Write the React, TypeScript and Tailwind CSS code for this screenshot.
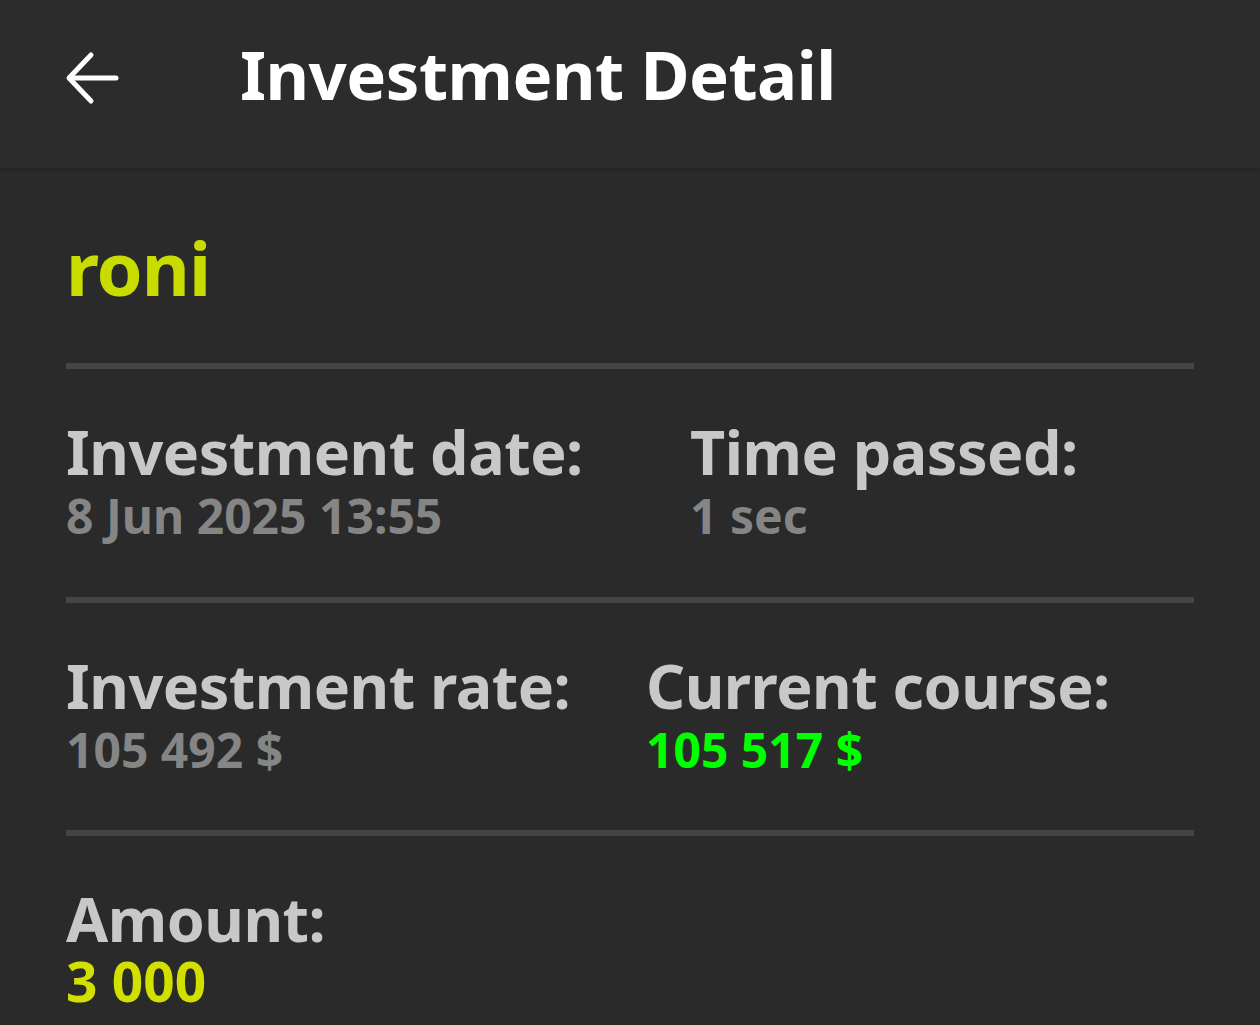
import React from "react";

const font = { fontFamily: '"Noto Sans", "Open Sans", sans-serif' };

function Divider() {
  return <div className="h-[6px] bg-[#444444] mx-[66px]" />;
}

export default function App() {
  return (
    <div className="w-[1260px] h-[1025px] bg-[#2a2a2a] overflow-hidden" style={font}>
      <header className="h-[168px] bg-[#2c2c2c] shadow-[0_2px_4px_rgba(0,0,0,0.2)] relative">
        <div className="flex items-start pt-[34px]">
          <svg width="56" height="56" viewBox="0 0 56 56" className="ml-[64px] mt-[16px]" fill="none" stroke="#ffffff" strokeWidth="5" strokeLinecap="round" strokeLinejoin="round">
            <path d="M52 28H6" />
            <path d="M27 5L5 28L27 51" />
          </svg>
          <h1 className="ml-[120px] text-[67px] leading-[80px] font-bold text-white tracking-[-0.5px]">Investment Detail</h1>
        </div>
      </header>
      <div className="pt-[55px]">
        <div className="px-[66px] text-[74px] leading-[90px] font-bold text-[#c8dc00] tracking-[-1px]">roni</div>
        <div className="h-[50px]" />
        <Divider />
        <div className="flex px-[66px] pt-[47px] pb-[53px]">
          <div className="w-[624px]">
            <div className="text-[61px] leading-[72px] font-bold text-[#c8c8c8] tracking-[-0.5px]">Investment date:</div>
            <div className="text-[48px] leading-[56px] font-bold text-[#858585]">8 Jun 2025 13:55</div>
          </div>
          <div>
            <div className="text-[61px] leading-[72px] font-bold text-[#c8c8c8] tracking-[-0.5px]">Time passed:</div>
            <div className="text-[48px] leading-[56px] font-bold text-[#858585]">1 sec</div>
          </div>
        </div>
        <Divider />
        <div className="flex px-[66px] pt-[47px] pb-[52px]">
          <div className="w-[580px]">
            <div className="text-[61px] leading-[72px] font-bold text-[#c8c8c8] tracking-[-0.5px]">Investment rate:</div>
            <div className="text-[48px] leading-[56px] font-bold text-[#858585]">105 492 $</div>
          </div>
          <div>
            <div className="text-[61px] leading-[72px] font-bold text-[#c8c8c8] tracking-[-0.5px]">Current course:</div>
            <div className="text-[48px] leading-[56px] font-bold text-[#00ff00]">105 517 $</div>
          </div>
        </div>
        <Divider />
        <div className="px-[66px] pt-[47px]">
          <div className="text-[61px] leading-[72px] font-bold text-[#c8c8c8] tracking-[-0.5px]">Amount:</div>
          <div className="text-[55px] leading-[52px] font-bold text-[#d2e000]">3 000</div>
        </div>
      </div>
    </div>
  );
}
